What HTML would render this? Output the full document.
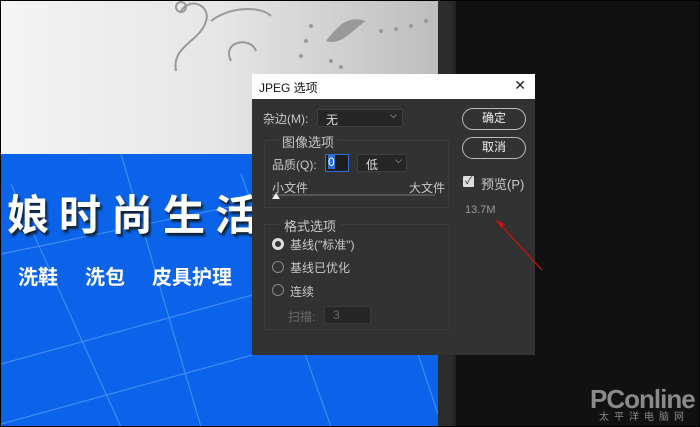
<!DOCTYPE html>
<html><head><meta charset="utf-8"><style>
*{margin:0;padding:0;box-sizing:border-box}
body{width:700px;height:427px;background:#111;position:relative;overflow:hidden;font-family:"Liberation Sans","Noto Sans CJK SC",sans-serif}
.a{position:absolute}
.frame{left:0;top:0;width:700px;height:427px;border:1px solid #000;z-index:50}
.top{left:1px;top:1px;width:437px;height:153px;background:linear-gradient(90deg,#f4f4f4 0%,#e6e6e6 50%,#bdbdbd 100%)}
.blue{left:1px;top:154px;width:437px;height:273px;background:#0a63e8;overflow:hidden}
.strip{left:438px;top:0;width:18px;height:427px;background:#2c2c2c;border-right:3px solid #232323}
.big{color:#fff;font-size:42px;font-weight:bold;letter-spacing:10px;text-shadow:2px 3px 2px #123;white-space:nowrap}
.sm{color:#fff;font-size:20px;font-weight:bold}
.dlg{left:252px;top:74px;width:283px;height:281px;background:#323232;color:#c8c8c8;font-size:12px}
.title{left:0;top:0;width:283px;height:25px;background:#fff;color:#111;font-size:12px;padding:5px 7px}
.dd{background:#262626;border:1px solid #3e3e3e;border-radius:2px;color:#ddd;padding:1px 8px}
.btn{border:1.5px solid #bbb;border-radius:11px;color:#eee;text-align:center;font-size:12px;line-height:19px}
.grp{border:1px solid #3c3c3c;border-radius:2px}
.radio{width:12px;height:12px;border:1px solid #888;border-radius:50%}
</style></head><body>
<div class="a top">
<svg class="a" style="left:150px;top:0" width="290" height="80"><g fill="none" stroke="#999" stroke-width="2"><path d="M30 10 C40 -5 60 5 55 20 C50 40 20 45 25 70"/><path d="M60 20 C80 5 110 5 120 15"/><path d="M80 60 C70 40 100 35 105 50"/><circle cx="30" cy="6" r="5"/></g><g fill="#999"><path d="M175 40 C190 20 200 15 215 20 C200 30 190 45 175 40Z"/><circle cx="180" cy="60" r="2"/><circle cx="190" cy="66" r="2"/><circle cx="230" cy="30" r="2"/><circle cx="245" cy="28" r="2"/><circle cx="260" cy="25" r="2"/><circle cx="275" cy="20" r="2"/><circle cx="155" cy="40" r="2"/><circle cx="150" cy="55" r="2"/><circle cx="160" cy="25" r="2"/></g></svg>
</div>
<div class="a blue">
<svg class="a" style="left:0;top:0" width="437" height="273"><g stroke="#3f8bf6" stroke-width="1.2" fill="none"><path d="M120 0 L200 273"/><path d="M10 30 L120 273"/><path d="M240 20 L330 273"/><path d="M0 270 L437 150"/><path d="M0 100 L437 10"/><path d="M0 210 L437 90"/><path d="M370 60 L437 260"/></g></svg>
<div class="a big" style="left:6px;top:28px">娘时尚生活</div>
<div class="a sm" style="left:17px;top:107px">洗鞋</div>
<div class="a sm" style="left:84px;top:107px">洗包</div>
<div class="a sm" style="left:151px;top:107px">皮具护理</div>
</div>
<div class="a strip"></div>
<div class="a dlg">
<div class="a title">JPEG 选项<span class="a" style="right:9px;top:3px;font-size:14px;color:#222">✕</span></div>
<div class="a" style="left:11px;top:36px">杂边(M):</div>
<div class="a dd" style="left:65px;top:35px;width:86px;height:18px">无<span class="a" style="right:5px;top:0;font-size:9px">⌵</span></div>
<div class="a grp" style="left:12px;top:66px;width:185px;height:68px"></div>
<div class="a" style="left:26px;top:58px;background:#323232;padding:0 4px;font-size:13px">图像选项</div>
<div class="a" style="left:20px;top:82px">品质(Q):</div>
<div class="a" style="left:73px;top:80px;width:24px;height:18px;border:1px solid #2f6fd0;background:#1e1e1e;color:#fff;padding-left:2px"><span style="background:#2a6fd8">0</span></div>
<div class="a dd" style="left:105px;top:80px;width:50px;height:18px">低<span class="a" style="right:4px;top:0;font-size:9px">⌵</span></div>
<div class="a" style="left:20px;top:105px">小文件</div>
<div class="a" style="left:157px;top:105px">大文件</div>
<div class="a" style="left:20px;top:120px;width:163px;height:2px;background:#555"></div>
<div class="a" style="left:20px;top:119px;width:0;height:0;border-left:4px solid transparent;border-right:4px solid transparent;border-bottom:6px solid #eee"></div>
<div class="a grp" style="left:12px;top:150px;width:186px;height:106px"></div>
<div class="a" style="left:28px;top:142px;background:#323232;padding:0 4px;font-size:13px">格式选项</div>
<div class="a radio" style="left:20px;top:164px;border:3px solid #ddd;background:#333"></div>
<div class="a" style="left:38px;top:162px">基线("标准")</div>
<div class="a radio" style="left:20px;top:187px"></div>
<div class="a" style="left:38px;top:185px">基线已优化</div>
<div class="a radio" style="left:20px;top:210px"></div>
<div class="a" style="left:38px;top:209px">连续</div>
<div class="a" style="left:36px;top:234px;color:#6a6a6a">扫描:</div>
<div class="a dd" style="left:72px;top:232px;width:47px;height:18px;color:#666;border-color:#3a3a3a">3</div>
<div class="a btn" style="left:210px;top:34px;width:64px;height:22px">确定</div>
<div class="a btn" style="left:210px;top:63px;width:64px;height:22px">取消</div>
<div class="a" style="left:211px;top:102px;width:11px;height:11px;background:#ddd;border-radius:1px;color:#222;font-size:10px;line-height:11px;text-align:center">✓</div>
<div class="a" style="left:229px;top:100px;font-size:13px">预览(P)</div>
<div class="a" style="left:213px;top:130px;font-size:11px;color:#999">13.7M</div>
</div>
<svg class="a" style="left:490px;top:210px" width="60" height="65"><path d="M52 60 L8 12" stroke="#d01010" stroke-width="1.2"/><path d="M6 10 L15 14 L11 18Z" fill="#d01010"/></svg>
<div class="a" style="left:590px;top:384px;color:#8a8a8a;font-size:26px;font-weight:bold;letter-spacing:-1px">PConline</div>
<div class="a" style="left:599px;top:408px;color:#8a8a8a;font-size:10px;letter-spacing:5px">太平洋电脑网</div>
<div class="a frame"></div>
</body></html>
